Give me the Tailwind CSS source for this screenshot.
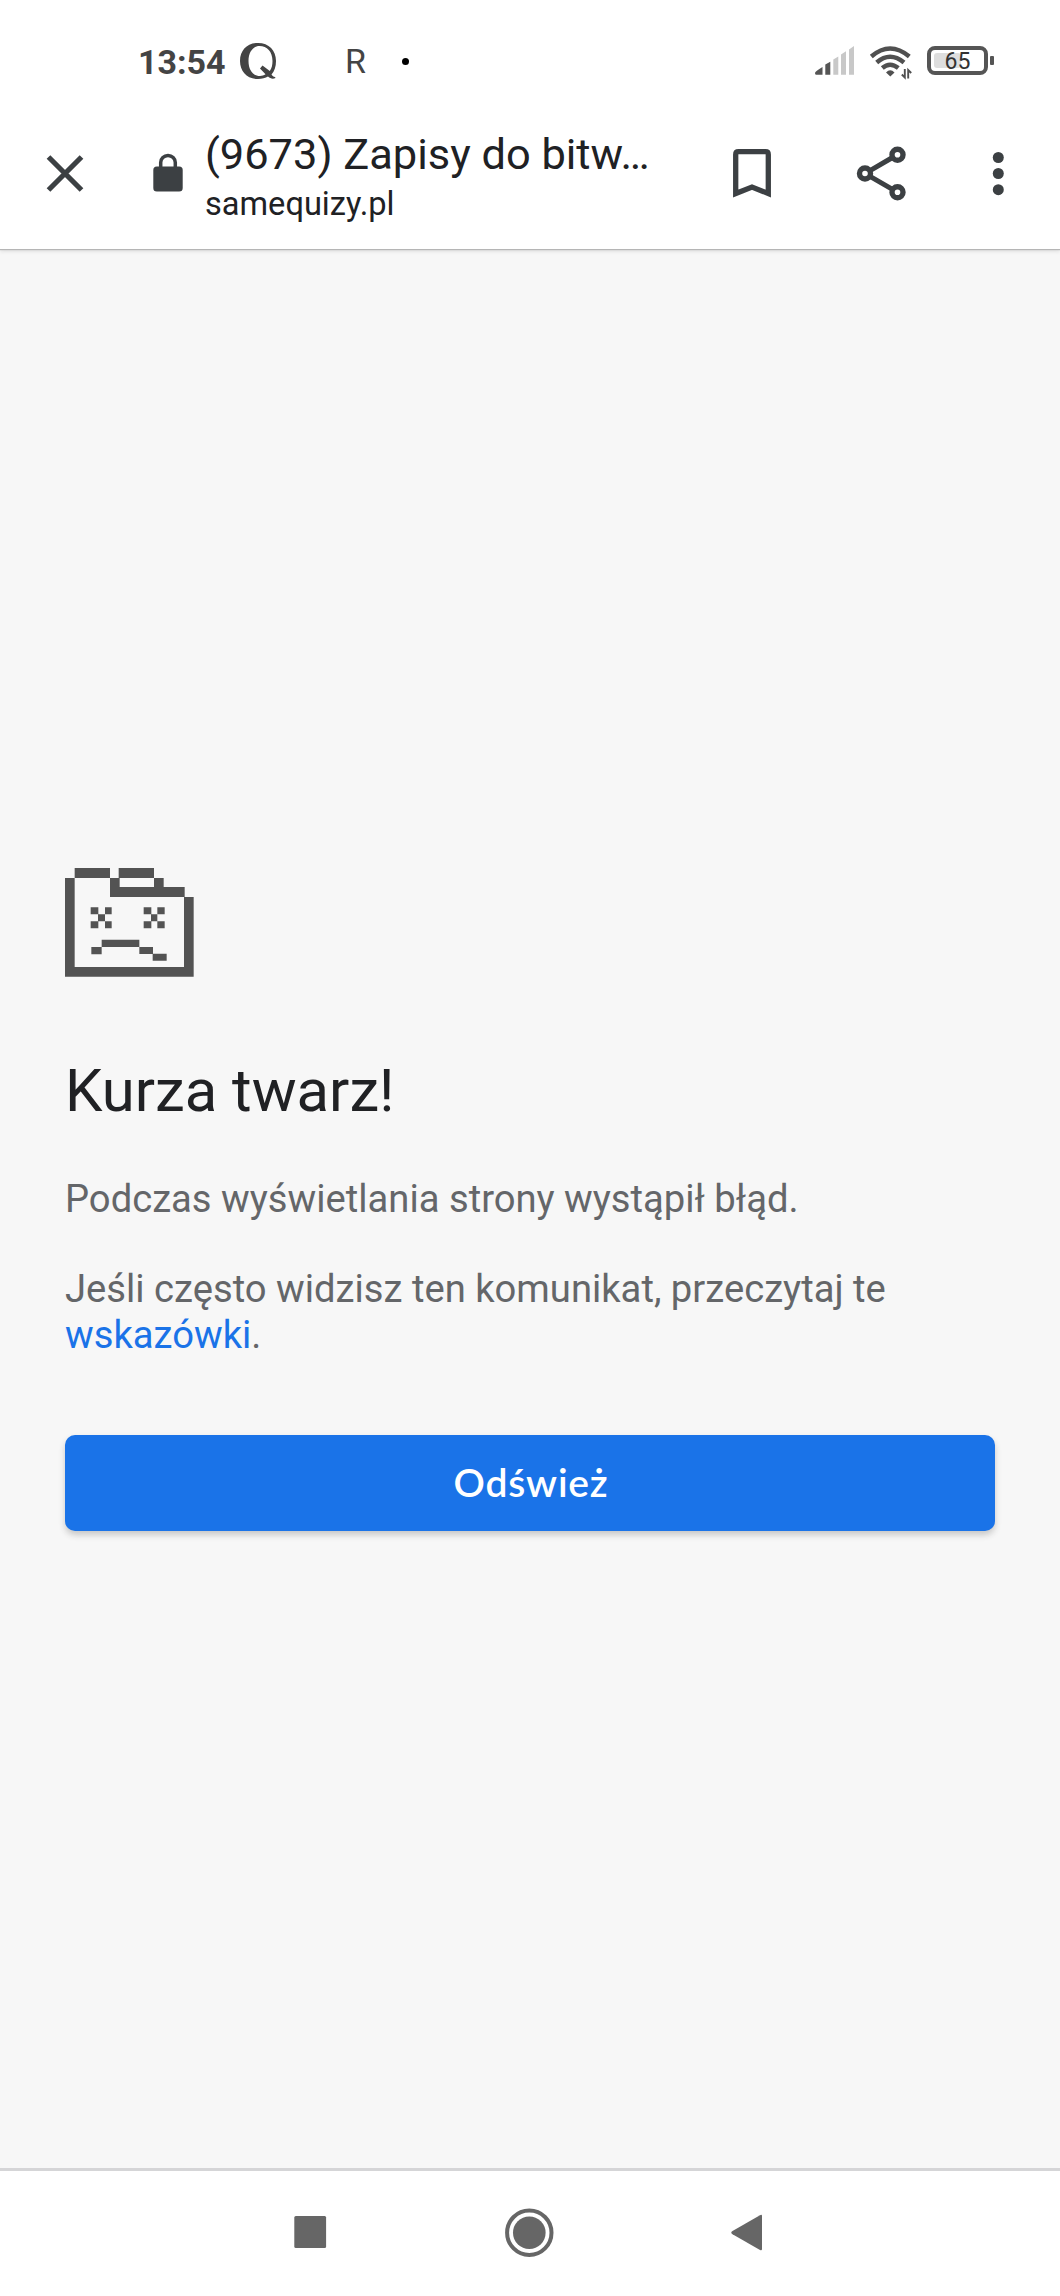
<!DOCTYPE html>
<html lang="pl">
<head>
<meta charset="utf-8">
<title>samequizy.pl</title>
<script src="https://cdn.jsdelivr.net/npm/@tailwindcss/browser@4"></script>
</head>
<body class="flex h-[2296px] w-[1060px] flex-col overflow-hidden bg-[#f7f7f7] font-['Roboto',sans-serif]">
<header class="h-[249px] shrink-0 bg-white shadow-[0_1px_1px_#b5b5b5,0_2px_4px_#d8d8d8]">
  <!-- status bar -->
  <div class="flex h-[122px] items-start pl-[138px] text-[#444] leading-[40px]">
    <span class="mt-[42px] w-[102px] text-[34px] font-bold whitespace-nowrap">13:54</span>
    <svg class="mt-[42px] h-[38px] w-[38px]" viewBox="240 42 38 38"><path fill="#444" fill-rule="evenodd" d="M258 43C247 43 240 50.500 240 61C240 71.500 247 79 258 79C262 79 265.500 78 268 76.500C270.500 78.500 272.500 79.300 275.500 78L275 77C273.500 77 272.500 76 271.500 74.500C274.500 71 276 66.500 276 61C276 50.500 269 43 258 43ZM259.500 46C267 46 272.500 51.500 272.500 61C272.500 65 271.800 68 269.800 71L262.500 65.500L260 68.500L265.500 74.300C263.800 75.500 262 76 260 76C253 76 248.500 70 248.500 61C248.500 52 253 46 259.500 46Z"/></svg>
    <span class="mt-[41px] ml-[67px] w-[57px] text-[34px]">R</span>
    <span class="mt-[58px] size-[6.500px] rounded-full bg-black"></span>
    <svg class="mt-[44px] ml-[405px] h-[32px] w-[40px]" viewBox="814 44 40 32"><path fill="#555" d="M815 73Q815 71.500 822.500 67V74.700H816Q815 74.700 815 73ZM825.300 64.500L830.300 61.700V74.700H825.300Z"/><path fill="#c8c8c8" d="M833.300 59.500L838.300 56.500V74.700H833.300ZM841 54.500L846 51.300V74.700H841ZM849 49.500L854 46V74.700H849Z"/></svg>
    <svg class="mt-[44px] ml-[15px] h-[36px] w-[44px]" viewBox="869 44 44 36" fill="none" stroke="#505050" stroke-width="4.500"><path d="M871.300 56.500Q890 40.500 909.300 56.500M876.700 62.500Q890 51 904 62.500M882.300 68Q890 61.500 898.300 68"/><path fill="#505050" stroke="none" d="M886 72.500Q890.300 68 894.500 72.500L890.300 76.500Z"/><path stroke-width="1.900" d="M904.800 69V77.500L901.800 74.500M908.200 78.500V70L911.200 73"/></svg>
    <div class="relative mt-[46px] ml-[14px] flex h-[29px] w-[61px] items-center rounded-[8px] border-[4.500px] border-[#555] text-[23px] leading-[29px]">
      <span class="absolute top-[3px] left-[3px] h-[15px] w-[27px] rounded-[3px] bg-[#dedede]"></span>
      <span class="relative top-[1px] ml-[14px] text-[#333]">65</span>
      <span class="absolute top-[6px] -right-[10px] h-[9px] w-[4px] rounded-[1px] bg-[#555]"></span>
    </div>
  </div>
  <!-- tab toolbar -->
  <div class="flex h-[127px] items-start text-[#202124]">
    <svg class="mt-[31px] ml-[44px] h-[40px] w-[42px]" viewBox="44 153 42 40" stroke="#3c4043" stroke-width="5.200"><path d="M48.500 157L81.500 190M81.500 157L48.500 190"/></svg>
    <svg class="mt-[31px] ml-[66px] h-[40px] w-[32px]" viewBox="152 153 32 40"><rect x="153.300" y="166.500" width="29.400" height="25" rx="3.500" fill="#3c4043"/><path fill="none" stroke="#3c4043" stroke-width="3.500" d="M160.700 168V162.500a7.300 7 0 0 1 14.600 0V168"/></svg>
    <div class="ml-[21px] w-[460px] whitespace-nowrap">
      <div class="mt-[9px] text-[43.400px] leading-[48px]">(9673) Zapisy do bitw…</div>
      <div class="mt-[5px] text-[32.600px] leading-[40px]">samequizy.pl</div>
    </div>
    <svg class="mt-[26px] ml-[67px] h-[52px] w-[40px]" viewBox="732 148 40 52"><path fill="none" stroke="#3c4043" stroke-width="5.300" d="M735.700 193.500V154.500Q735.700 151.700 738.500 151.700H765.500Q768.300 151.700 768.300 154.500V193.500L752 187Z"/></svg>
    <svg class="mt-[22px] ml-[84px] h-[60px] w-[52px]" viewBox="856 144 52 60" fill="none" stroke="#3c4043"><path stroke-width="5" d="M892.500 157.500L870 170.600M892.500 189.300L870 176.300"/><circle cx="897.500" cy="154.700" r="5.500" stroke-width="5.400"/><circle cx="865" cy="173.500" r="5.500" stroke-width="5.400"/><circle cx="897.500" cy="192.300" r="5.500" stroke-width="5.400"/></svg>
    <svg class="mt-[28px] ml-[84px] h-[48px] w-[14px]" viewBox="992 150 14 48" fill="#3c4043"><circle cx="998.300" cy="157.500" r="5.500"/><circle cx="998.300" cy="173.500" r="5.500"/><circle cx="998.300" cy="189.700" r="5.500"/></svg>
  </div>
</header>
<main class="flex-1 px-[65px] pt-[619px] text-[38.200px] leading-[45.300px] text-[#646669]">
  <svg class="h-[109px] w-[129px]" viewBox="45 55 387 327" fill="#535353"><path d="M74 55H180V85H74ZM206 55H312V85H341V112H404V142H431V381H45V85H74V352H402V142H180V85H206ZM209 85V112H312V85Z" fill-rule="evenodd"/><path d="M122 173h23v21h20v-21h20v21h-20v21h20v21h-20v-21h-20v21h-23v-21h22v-21h-22zM281 173h23v21h18v-21h22v21h-22v21h22v21h-22v-21h-18v21h-23v-21h22v-21h-22zM155 270H268V292H309V312H350V333H308V313H268V292H155V314H124V292H155Z"/></svg>
  <h1 class="mt-[79px] text-[59.800px] leading-[70px] text-[#202124]">Kurza twarz!</h1>
  <p class="mt-[51px]">Podczas wyświetlania strony wystąpił błąd.</p>
  <p class="mt-[45px]">Jeśli często widzisz ten komunikat, przeczytaj te <a class="text-[#1a73e8]">wskazówki</a>.</p>
  <button class="mt-[77px] flex h-[96.500px] w-full items-center justify-center rounded-[10px] bg-[#1a73e8] pl-[2px] font-['Lato',sans-serif] text-[39px] tracking-[0.800px] font-semibold text-white shadow-[0_4px_6px_#c8c8c8]">Odśwież</button>
</main>
<nav class="flex h-[128px] shrink-0 border-t-[3px] border-[#d5d5d7] bg-white">
  <svg class="h-[125px] w-[1060px]" viewBox="0 2171 1060 125" fill="#666"><rect x="294.300" y="2216" width="31.800" height="32" rx="1.500"/><circle cx="529.300" cy="2232.700" r="16.300"/><circle cx="529.300" cy="2232.700" r="22.200" fill="none" stroke="#666" stroke-width="4"/><path d="M732.500 2231L760 2215.200Q762 2214.200 762 2216V2249Q762 2251 760 2250L732.500 2234.200Q730 2232.600 732.500 2231Z"/></svg>
</nav>
</body>
</html>
